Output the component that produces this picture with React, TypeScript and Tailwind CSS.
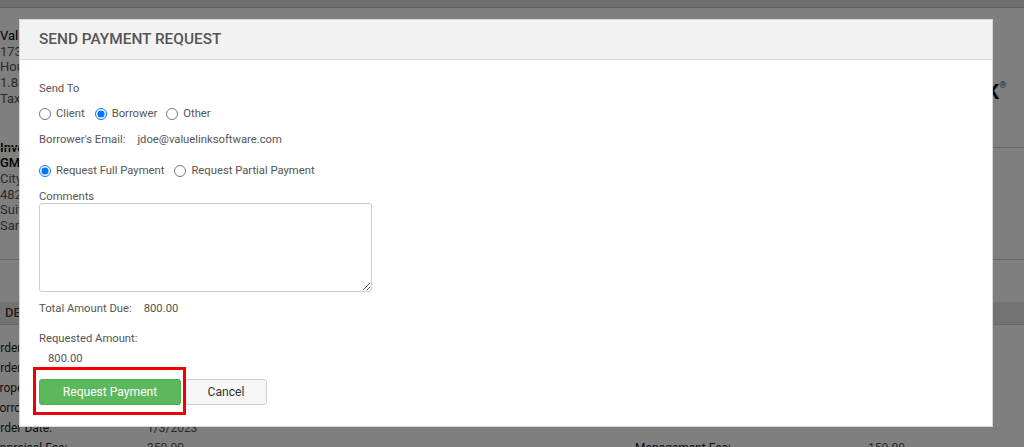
import React from "react";

function Background() {
  return (
    <div className="absolute inset-0 bg-white text-[12px] text-[#555]" style={{ fontFamily: "Roboto, 'Liberation Sans', sans-serif" }}>
      <div className="h-[8px] bg-[#dedede] border-b border-[#c8c8c8]" />
      <div className="flex justify-between pr-[18px]">
        <div className="pt-[20px] leading-[15.7px] text-[13px]">
          <div className="text-black">ValueLink Software</div>
          <div>17304 Preston Rd</div>
          <div>Houston, TX 77001</div>
          <div>1.888.000.0000</div>
          <div>Tax ID 00-0000000</div>
          <div className="h-[33px]" />
          <div className="text-black font-medium">Invoice To</div>
          <div className="text-black font-medium">GMH Lending</div>
          <div>City Center</div>
          <div>4820 Main St</div>
          <div>Suite 200</div>
          <div>San Diego, CA</div>
        </div>
        <div className="pt-[74px] text-[20px] font-bold text-black tracking-tight leading-none flex items-start">
          <span>VALUELINK</span>
          <span className="text-[9px] font-normal text-[#555] mt-[-1px] ml-[1px]">®</span>
        </div>
      </div>
      <div className="absolute left-0 right-0 top-[147px] border-t border-[#d0d0d0]" />
      <div className="absolute left-0 right-0 top-[259px] border-t border-[#d0d0d0]" />
      <div className="absolute left-0 right-0 top-[302px] h-[23px] bg-[#e6e6e6] border-b border-[#ccc] flex items-center pl-[5px] text-[13px] font-medium text-[#444]">DETAILS</div>
      <div className="absolute left-0 top-[338px] text-[12px] text-[#222] leading-[20px] -ml-[8px]">
        <div>Order #:</div>
        <div>Order Type:</div>
        <div>Property:</div>
        <div>Borrower:</div>
        <div className="flex"><span className="w-[155px]">Order Date:</span><span className="text-[#555]">1/3/2023</span></div>
        <div className="flex"><span className="w-[155px]">Appraisal Fee:</span><span className="text-[#555]">350.00</span></div>
      </div>
      <div className="absolute left-[635px] top-[438px] text-[12px] text-[#222] flex leading-[20px]">
        <span className="w-[233px]">Management Fee:</span><span className="text-[#555]">150.00</span>
      </div>
    </div>
  );
}

export default function App() {
  return (
    <div className="relative w-[1024px] h-[447px] overflow-hidden" style={{ fontFamily: "Roboto, 'Liberation Sans', sans-serif" }}>
      <Background />
      <div className="absolute inset-0 bg-black/50" />
      <div className="absolute left-[19px] top-[19px] w-[974px] h-[408px] bg-white border border-[#d6d6d6] text-[#555]">
        <div className="h-[40px] bg-[#f2f2f2] border-b border-[#d9d9d9] flex items-center px-[19px]">
          <h2 className="text-[15.4px] font-medium text-[#555]">SEND PAYMENT REQUEST</h2>
        </div>
        <div className="px-[19px] pt-[22px] text-[11.25px] leading-[14px]">
          <div>Send To</div>
          <div className="flex items-center mt-[11px] h-[14px]">
            <label className="flex items-center gap-[5px] mr-[10px]">
              <input type="radio" name="sendto" className="m-0 w-[12px] h-[12px]" readOnly /> Client
            </label>
            <label className="flex items-center gap-[5px] mr-[9px]">
              <input type="radio" name="sendto" className="m-0 w-[12px] h-[12px]" defaultChecked /> Borrower
            </label>
            <label className="flex items-center gap-[5px]">
              <input type="radio" name="sendto" className="m-0 w-[12px] h-[12px]" /> Other
            </label>
          </div>
          <div className="flex mt-[12px]">
            <span>Borrower's Email:</span>
            <span className="ml-[12px]">jdoe@valuelinksoftware.com</span>
          </div>
          <div className="flex items-center mt-[17px] h-[14px]">
            <label className="flex items-center gap-[5px] mr-[10px]">
              <input type="radio" name="pay" className="m-0 w-[12px] h-[12px]" defaultChecked /> Request Full Payment
            </label>
            <label className="flex items-center gap-[5px]">
              <input type="radio" name="pay" className="m-0 w-[12px] h-[12px]" /> Request Partial Payment
            </label>
          </div>
          <div className="mt-[12px]">Comments</div>
          <textarea className="block mt-[-1px] w-[333px] h-[89px] border border-[#ccc] rounded-[3px] bg-white outline-none" />
          <div className="flex mt-[10px]">
            <span>Total Amount Due:</span>
            <span className="ml-[12px]">800.00</span>
          </div>
          <div className="mt-[16px]">Requested Amount:</div>
          <div className="mt-[6px] ml-[9px]">800.00</div>
          <div className="relative flex items-center gap-[4px] mt-[13px]">
            <div className="absolute left-[-6px] top-[-12px] w-[153px] h-[48px] border-[3px] border-[#f00000]" />
            <button className="w-[142px] h-[26px] bg-[#5cb85c] text-white text-[12.1px] rounded-[3px] border border-[#4cae4c]">Request Payment</button>
            <button className="w-[82px] h-[26px] bg-[#f7f7f7] text-[#333] text-[12.1px] rounded-[3px] border border-[#ccc]">Cancel</button>
          </div>
        </div>
      </div>
    </div>
  );
}
